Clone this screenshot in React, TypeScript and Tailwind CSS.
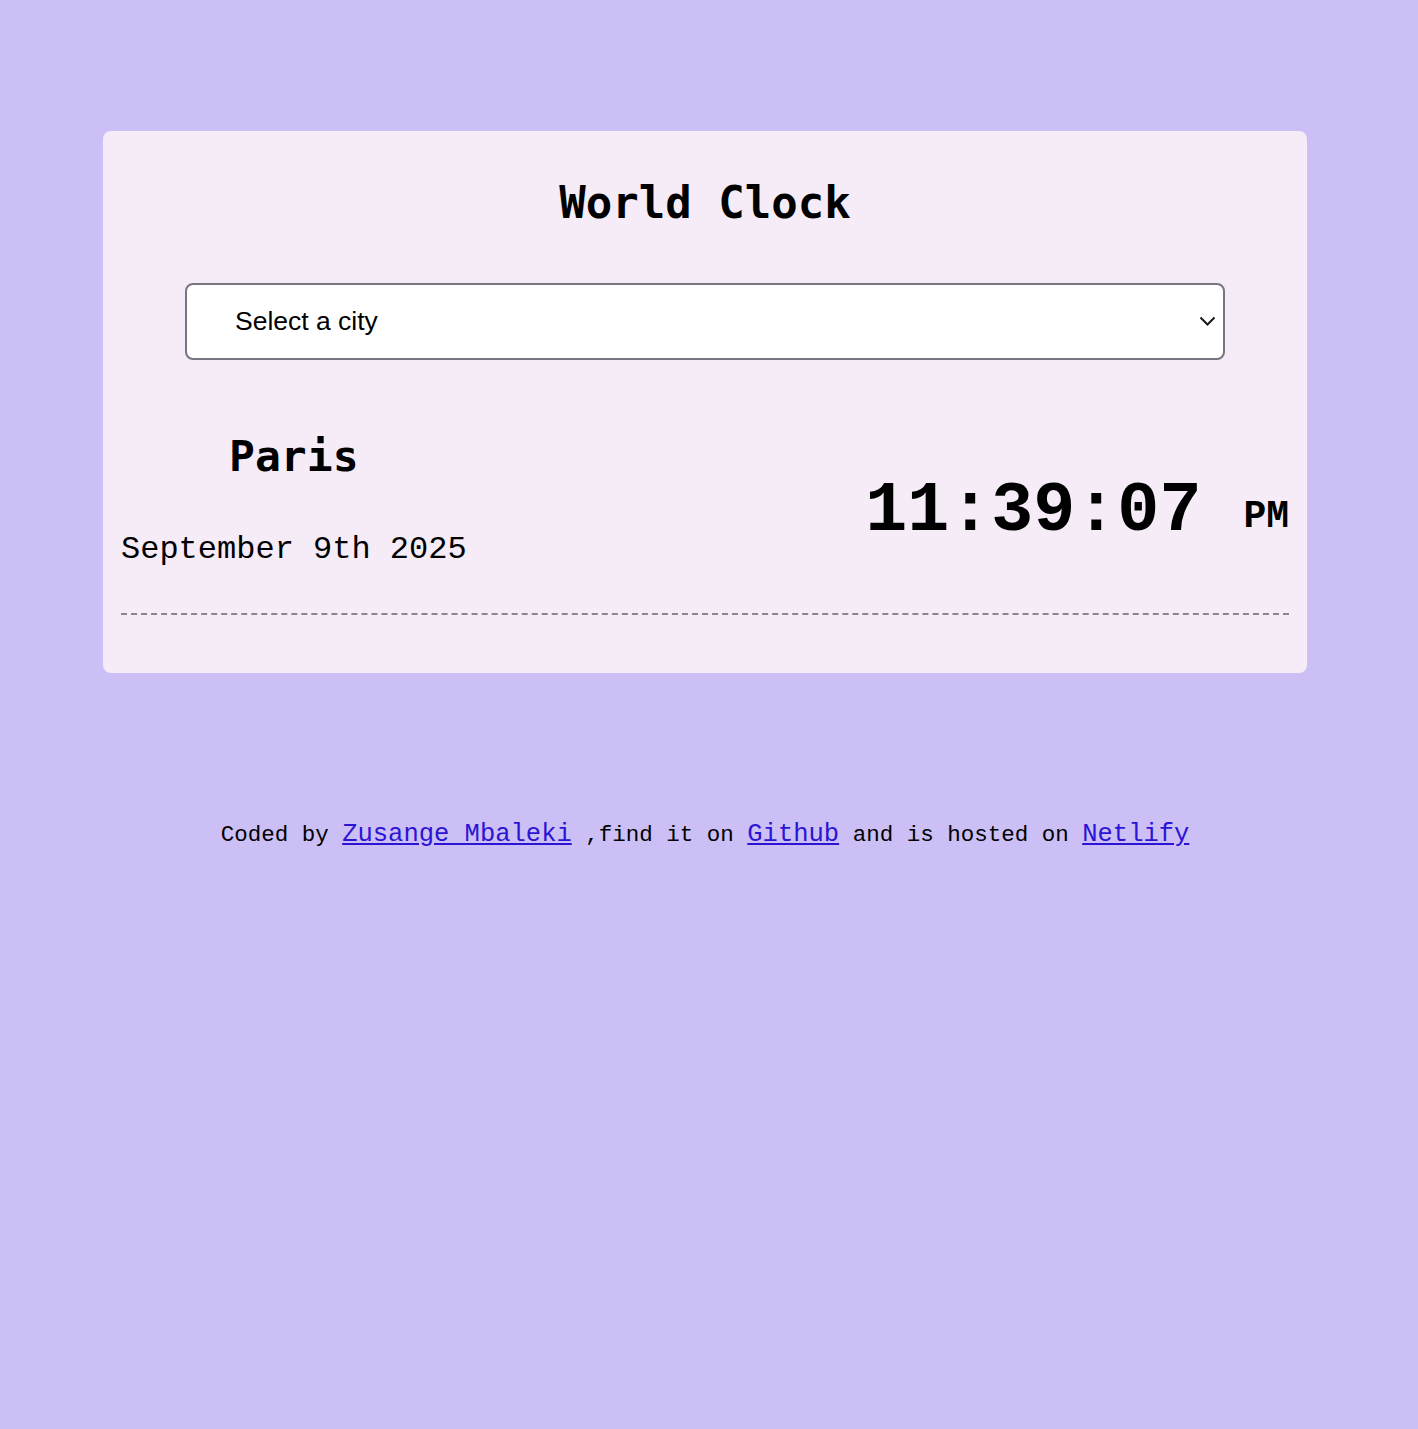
import React from "react";

export default function App() {
  return (
    <div className="min-h-[1429px] w-full bg-[#cbbff6]">
      <div className="w-[1410px] pt-[131px]">
        <div className="mx-auto w-[1204px] h-[542px] rounded-[8px] bg-[#f5ecf8] px-[18px]">
          <h1
            className="pt-[46px] text-center text-[44px] font-bold leading-[1.164] text-black"
            style={{ fontFamily: '"DejaVu Sans Mono", monospace' }}
          >
            World Clock
          </h1>
          <div className="mt-[55px] px-[64px]">
            <div className="relative h-[77px] w-[1040px] rounded-[8px] border-2 border-[#7a7480] bg-white">
              <div
                className="flex h-full items-center pl-[48px] text-[26.5px] text-black"
                style={{ fontFamily: '"Liberation Sans", Arial, sans-serif' }}
              >
                Select a city
              </div>
              <svg
                className="absolute right-[7px] top-[31px]"
                width="17"
                height="10"
                viewBox="0 0 17 10"
                fill="none"
              >
                <path d="M1.5 1.5 L8.5 8.5 L15.5 1.5" stroke="#1a1a1a" strokeWidth="2" />
              </svg>
            </div>
          </div>
          <div className="mt-[71px] flex items-start justify-between">
            <div className="flex flex-col items-center">
              <div
                className="text-[43px] font-bold leading-[1.164] text-black"
                style={{ fontFamily: '"DejaVu Sans Mono", monospace' }}
              >
                Paris
              </div>
              <div
                className="mt-[50px] text-[32px] leading-[1.2] text-black"
                style={{ fontFamily: '"Liberation Mono", monospace' }}
              >
                September 9th 2025
              </div>
            </div>
            <div
              className="mt-[39px] flex items-baseline font-bold text-black"
              style={{ fontFamily: '"Liberation Mono", monospace' }}
            >
              <span className="text-[70px] leading-[1.2]">11:39:07</span>
              <span className="ml-[42px] relative top-[-3px] text-[38px] leading-[1.2]">PM</span>
            </div>
          </div>
          <div className="mt-[43px] border-b-2 border-dashed border-[#8b8592]" />
        </div>
        <div
          className="mt-[143px] text-center text-[22.5px] text-black"
          style={{ fontFamily: '"Liberation Mono", monospace' }}
        >
          Coded by{" "}
          <a href="#" className="text-[25.5px] underline" style={{ color: "#2b14d4" }}>
            Zusange Mbaleki
          </a>{" "}
          ,find it on{" "}
          <a href="#" className="text-[25.5px] underline" style={{ color: "#2b14d4" }}>
            Github
          </a>{" "}
          and is hosted on{" "}
          <a href="#" className="text-[25.5px] underline" style={{ color: "#2b14d4" }}>
            Netlify
          </a>
        </div>
      </div>
    </div>
  );
}
